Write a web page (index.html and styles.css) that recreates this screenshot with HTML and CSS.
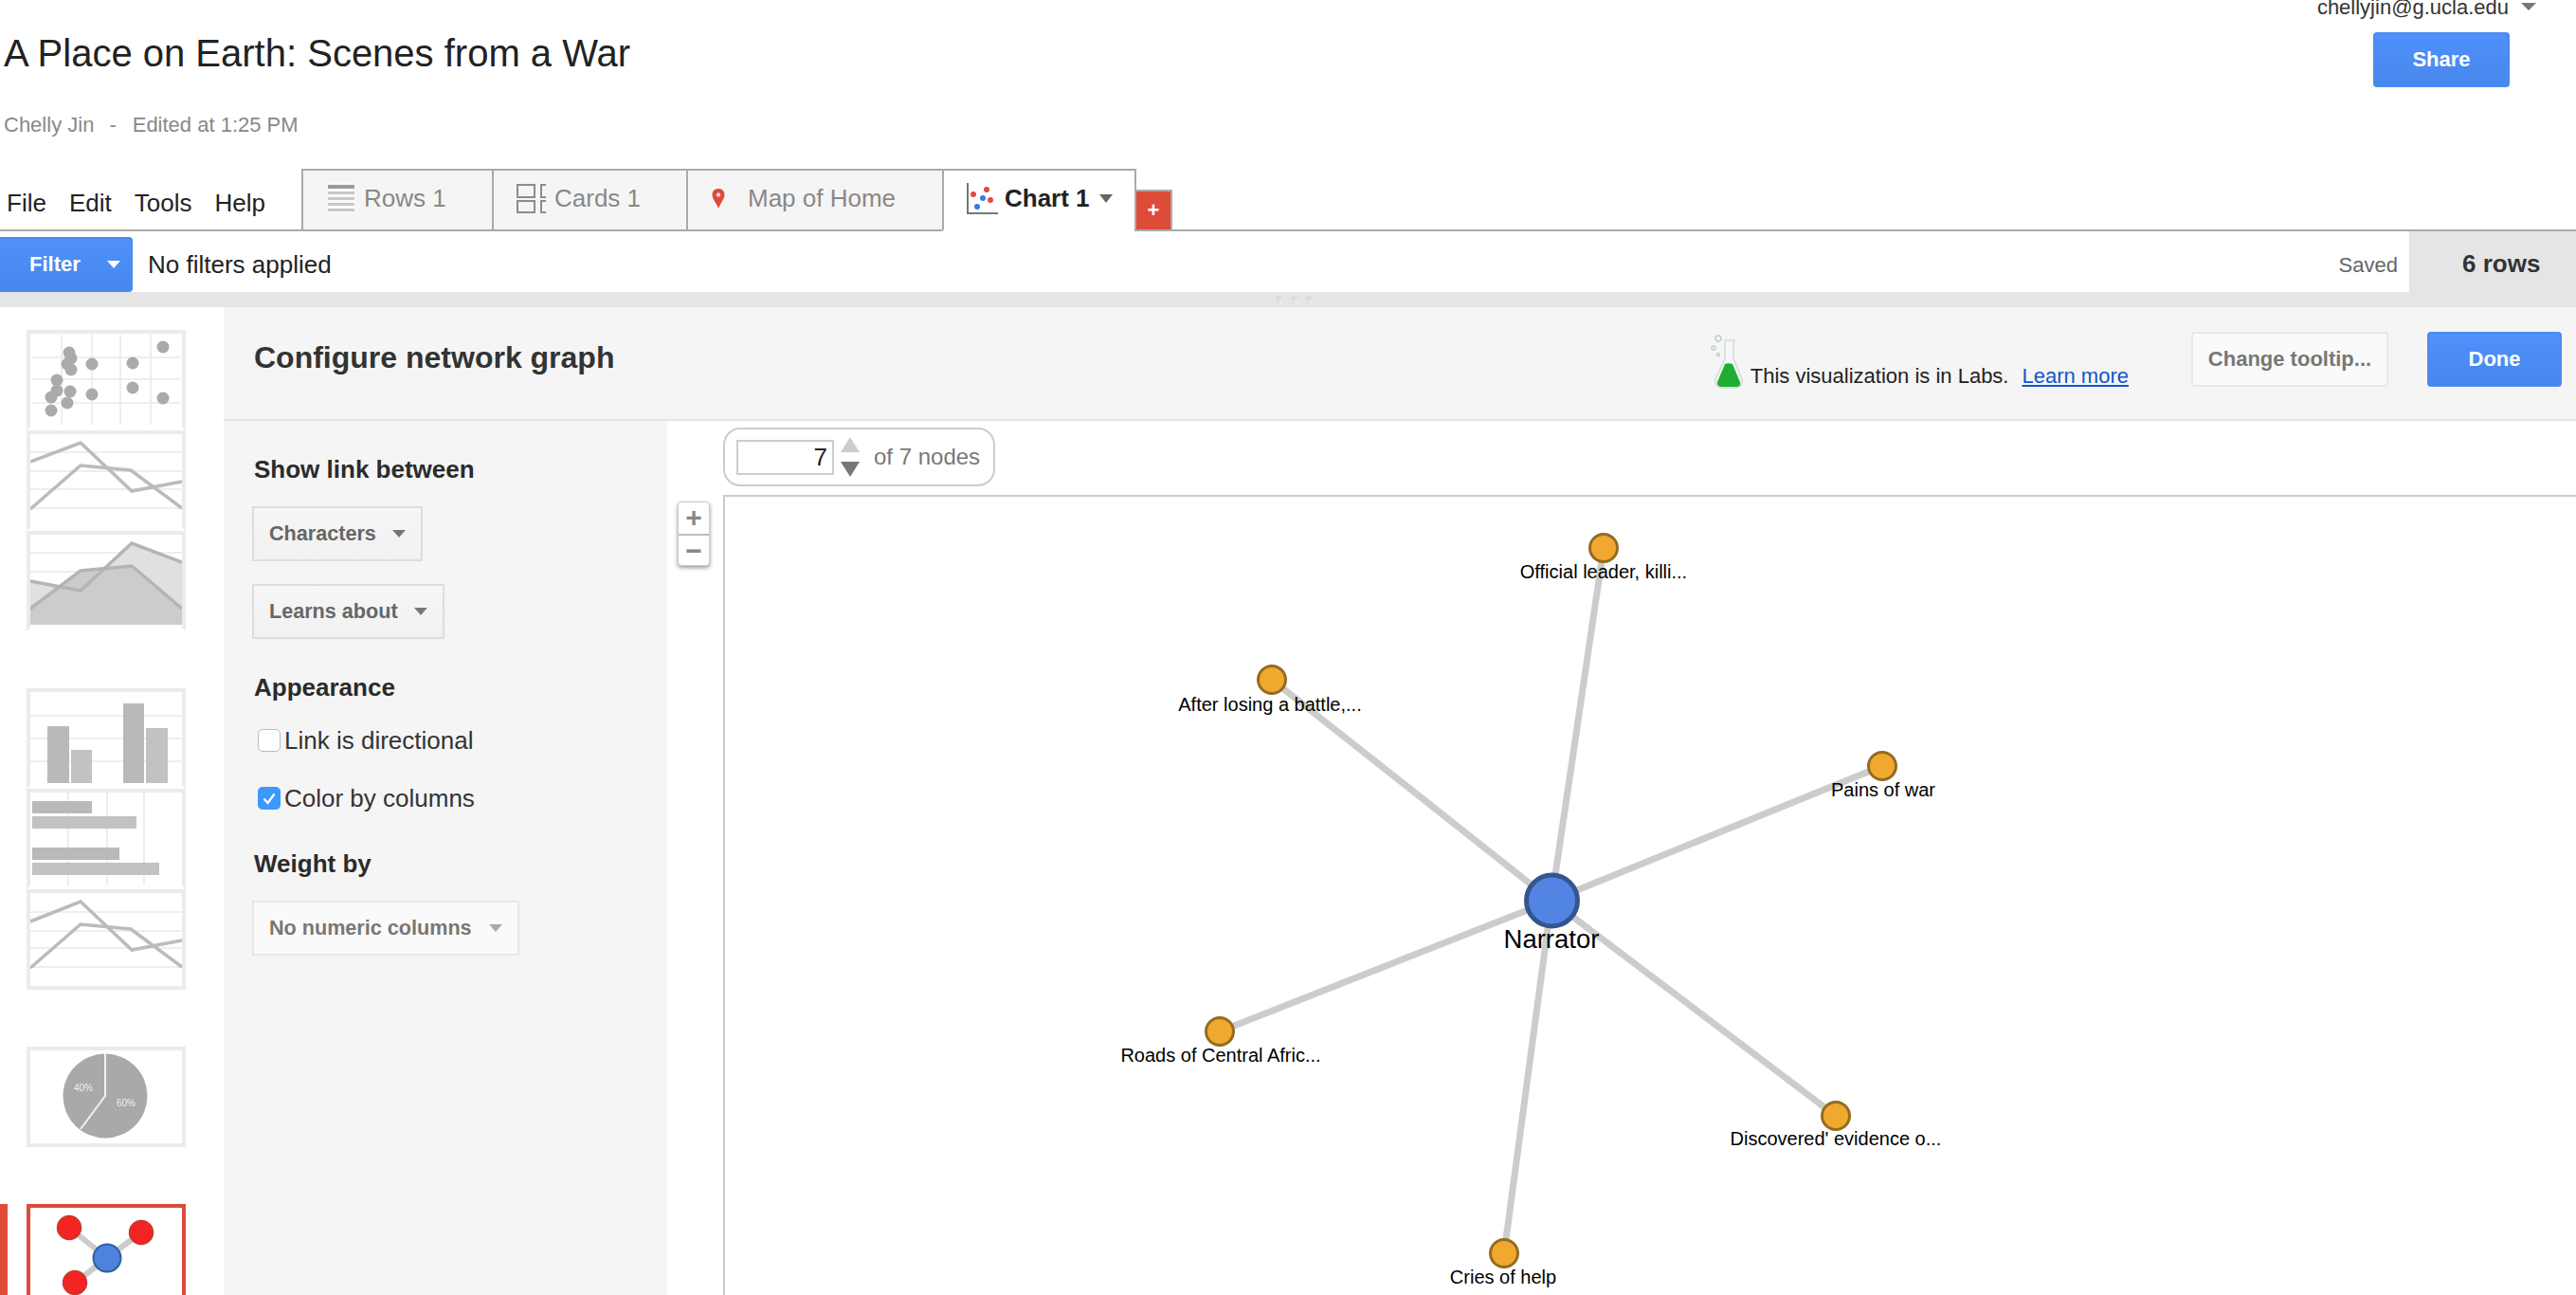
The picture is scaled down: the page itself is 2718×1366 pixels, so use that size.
FILE: index.html
```html
<!DOCTYPE html>
<html lang="en">
<head>
<meta charset="utf-8">
<title>A Place on Earth: Scenes from a War</title>
<link rel="stylesheet" href="styles.css">
</head>
<body>
<header class="topbar">
  <div class="doc">
    <h1 class="doc-title">A Place on Earth: Scenes from a War</h1>
    <p class="doc-meta">Chelly Jin<span class="doc-sep">-</span>Edited at 1:25 PM</p>
  </div>
  <div class="account">
    <div class="account-user"><span>chellyjin@g.ucla.edu</span><i class="arrow arrow-user"></i></div>
    <button class="btn-blue btn-share">Share</button>
  </div>
</header>

<nav class="tabbar">
  <ul class="menu">
    <li>File</li><li>Edit</li><li>Tools</li><li>Help</li>
  </ul>
  <div class="tabs">
    <div class="tab tab-rows">
      <svg class="tab-icon" width="30" height="32" viewBox="0 0 30 32"><rect width="30" height="32" fill="#fafafa"/><rect x="1" y="2" width="28" height="4" fill="#9a9a9a"/><g fill="#c8c8c8"><rect x="1" y="9" width="28" height="3"/><rect x="1" y="15" width="28" height="3"/><rect x="1" y="21" width="28" height="3"/><rect x="1" y="27" width="28" height="3"/></g></svg>
      <span>Rows 1</span>
    </div>
    <div class="tab tab-cards">
      <svg class="tab-icon" width="31" height="31" viewBox="0 0 31 31"><g fill="none" stroke="#8c8c8c" stroke-width="2"><rect x="1" y="1" width="18" height="13"/><rect x="1" y="18" width="18" height="12"/><path d="M31 1h-5v13h5M31 18h-5v12h5"/></g></svg>
      <span>Cards 1</span>
    </div>
    <div class="tab tab-map">
      <svg class="tab-icon" width="14" height="21" viewBox="0 0 14 21"><path d="M7 0C3 0 .5 2.800 .5 6.500 .5 11 5 15 7 21c2-6 6.500-10 6.500-14.500C13.500 2.800 11 0 7 0z" fill="#dd4b39"/><circle cx="7" cy="6.500" r="2.200" fill="#f7d0cb"/></svg>
      <span>Map of Home</span>
    </div>
    <div class="tab tab-active">
      <svg class="tab-icon" width="33" height="33" viewBox="0 0 33 33"><path d="M1 0v32h32" fill="none" stroke="#777" stroke-width="2"/><g fill="#dd4b39"><circle cx="7" cy="12" r="3"/><circle cx="21" cy="7" r="3"/><circle cx="25" cy="18" r="3"/></g><g fill="#3b78e7"><circle cx="17" cy="16" r="3"/><circle cx="11" cy="25" r="3"/></g></svg>
      <span>Chart 1</span>
      <i class="arrow arrow-tab"></i>
    </div>
    <div class="tab-add"><span>+</span></div>
  </div>
</nav>

<section class="filterbar">
  <button class="btn-blue btn-filter"><span>Filter</span><i class="arrow arrow-white"></i></button>
  <span class="filter-text">No filters applied</span>
  <span class="saved">Saved</span>
  <div class="rowcount">6 rows</div>
</section>
<div class="splitter"><i></i><i></i><i></i></div>

<main class="main">
  <aside class="thumbs">
    <div class="thumb">
      <svg class="thumb-art" width="160" height="102" viewBox="0 0 160 102"><g stroke="#eee" stroke-width="2"><path d="M33 1v95M65 1v95M95 1v95M127 1v95M2 25h156M2 48h156M2 73h156"/></g><g fill="#aaa"><circle cx="140" cy="14" r="6.500"/><circle cx="41" cy="20" r="6.500"/><circle cx="43" cy="26" r="6.500"/><circle cx="39" cy="32" r="6.500"/><circle cx="43" cy="38" r="6.500"/><circle cx="65" cy="32" r="6.500"/><circle cx="108" cy="31" r="6.500"/><circle cx="28" cy="49" r="6.500"/><circle cx="108" cy="57" r="6.500"/><circle cx="28" cy="60" r="6.500"/><circle cx="42" cy="61" r="6.500"/><circle cx="22" cy="67" r="6.500"/><circle cx="65" cy="64" r="6.500"/><circle cx="39" cy="73" r="6.500"/><circle cx="140" cy="68" r="6.500"/><circle cx="22" cy="81" r="6.500"/></g></svg>
    </div>
    <div class="thumb">
      <svg class="thumb-art" width="160" height="102" viewBox="0 0 160 102"><path d="M0 19h160M0 39h160M0 58h160M0 78h160" stroke="#eee" stroke-width="2"/><g fill="none" stroke="#bbb" stroke-width="3.500"><path d="M0 29 53 9l54 51 53-10"/><path d="M0 79 53 33l53 5 54 40"/></g></svg>
    </div>
    <div class="thumb">
      <svg class="thumb-art" width="160" height="102" viewBox="0 0 160 102"><path d="M0 19h160M0 39h160M0 59h160M0 79h160" stroke="#eee" stroke-width="2"/><path d="M0 49 53 59 107 9l53 20v66H0z" fill="#e0e0e0"/><path d="M0 78 53 38l54-5 53 45v17H0z" fill="#cccccc"/><g fill="none" stroke="#b4b4b4" stroke-width="3.500"><path d="M0 49 53 59 107 9l53 20"/><path d="M0 78 53 38l54-5 53 45"/></g></svg>
    </div>

    <div class="thumb thumb-group">
      <svg class="thumb-art" width="160" height="102" viewBox="0 0 160 102"><path d="M0 25h160M0 49h160M0 73h160" stroke="#eee" stroke-width="2"/><rect x="18" y="36" width="23" height="60" fill="#b9b9b9"/><rect x="43" y="61" width="22" height="35" fill="#c2c2c2"/><rect x="98" y="12" width="22" height="84" fill="#b9b9b9"/><rect x="122" y="38" width="23" height="58" fill="#c2c2c2"/></svg>
    </div>
    <div class="thumb">
      <svg class="thumb-art" width="160" height="102" viewBox="0 0 160 102"><path d="M40 0v98M81 0v98M120 0v98" stroke="#eee" stroke-width="2"/><rect x="2" y="9" width="63" height="13" fill="#b9b9b9"/><rect x="2" y="25" width="110" height="13" fill="#c2c2c2"/><rect x="2" y="58" width="92" height="13" fill="#b9b9b9"/><rect x="2" y="74" width="134" height="13" fill="#c2c2c2"/></svg>
    </div>
    <div class="thumb thumb-closed">
      <svg class="thumb-art" width="160" height="98" viewBox="0 0 160 98"><path d="M0 20h160M0 40h160M0 58h160M0 78h160" stroke="#eee" stroke-width="2"/><g fill="none" stroke="#bbb" stroke-width="3.500"><path d="M0 30 53 9l54 51 53-10"/><path d="M0 79 53 33l53 5 54 40"/></g></svg>
    </div>

    <div class="thumb thumb-group thumb-closed">
      <svg class="thumb-art" width="160" height="98" viewBox="0 0 160 98"><circle cx="79" cy="48" r="44.500" fill="#a9a9a9"/><path d="M79 3v45L53 83" fill="none" stroke="#f2f2f2" stroke-width="2"/><text x="56" y="43" class="pie-label" text-anchor="middle">40%</text><text x="101" y="59" class="pie-label" text-anchor="middle">60%</text></svg>
    </div>

    <div class="thumb thumb-group thumb-active">
      <svg class="thumb-art" width="160" height="98" viewBox="0 0 160 98"><path d="M41 21 81 53M117 26 81 53M47 79 81 53" stroke="#ccc" stroke-width="6"/><g fill="#f32424" stroke="#c23b2a" stroke-width="1.500"><circle cx="41" cy="21" r="12.500"/><circle cx="117" cy="26" r="12.500"/><circle cx="47" cy="79" r="12.500"/></g><circle cx="81" cy="53" r="14.500" fill="#4f82dc" stroke="#2f5fa0" stroke-width="2"/></svg>
    </div>
  </aside>

  <div class="config">
    <div class="config-head">
      <h2 class="config-title">Configure network graph</h2>
      <svg class="flask" width="38" height="58" viewBox="0 0 38 58"><g fill="none" stroke="#c4ccd0" stroke-width="1.500"><circle cx="9" cy="5" r="3"/><circle cx="4" cy="15" r="2"/><circle cx="9" cy="22" r="1.500"/></g><path d="M16 7h10l-1 3v16l9 22c1.500 5-2 9-6 9H12c-4 0-7-4-6-9l10-22z" fill="#f4f7f7" stroke="#d3dada" stroke-width="1.500"/><path d="M16 32c2-1 6-1 8 0l8 19c1 3-1 5-4 5H13c-3 0-6-2-5-5z" fill="#21ad33"/></svg>
      <span class="labs-text">This visualization is in Labs.</span>
      <a class="labs-link" href="#">Learn more</a>
      <button class="btn-tooltip">Change tooltip...</button>
      <button class="btn-blue btn-done">Done</button>
    </div>
    <div class="config-body">
      <div class="panel">
        <h3 class="panel-heading panel-heading-first">Show link between</h3>
        <div class="select select-first">Characters<i class="arrow arrow-grey"></i></div>
        <div class="select select-second">Learns about<i class="arrow arrow-grey"></i></div>
        <h3 class="panel-heading panel-heading-appearance">Appearance</h3>
        <label class="check check-first"><span class="box"></span>Link is directional</label>
        <label class="check check-second"><span class="box box-on"><svg width="24" height="24" viewBox="0 0 24 24"><path d="M6.500 12.500 10.500 17 17.500 7.500" fill="none" stroke="#fff" stroke-width="2.200"/></svg></span>Color by columns</label>
        <h3 class="panel-heading panel-heading-weight">Weight by</h3>
        <div class="select select-disabled">No numeric columns<i class="arrow arrow-light"></i></div>
      </div>
      <div class="chartarea">
        <div class="zoom">
          <div class="zoom-btn">+</div>
          <div class="zoom-btn zoom-minus">−</div>
        </div>
        <div class="chartcol">
          <div class="nodes-widget">
            <span class="nodes-input">7</span>
            <span class="spinner"><i class="spin-up"></i><i class="spin-down"></i></span>
            <span class="nodes-label">of 7 nodes</span>
          </div>
          <div class="frame">
            <svg class="graph" width="1953" height="842" viewBox="765 524 1953 842">
              <g class="links">
                <path d="M1637 950 1692 578"/>
                <path d="M1637 950 1342 717"/>
                <path d="M1637 950 1986 808"/>
                <path d="M1637 950 1287 1088"/>
                <path d="M1637 950 1937 1177"/>
                <path d="M1637 950 1587 1322"/>
              </g>
              <g class="leafs">
                <circle cx="1692" cy="578" r="14.500"/>
                <circle cx="1342" cy="717" r="14.500"/>
                <circle cx="1986" cy="808" r="14.500"/>
                <circle cx="1287" cy="1088" r="14.500"/>
                <circle cx="1937" cy="1177" r="14.500"/>
                <circle cx="1587" cy="1322" r="14.500"/>
              </g>
              <circle class="hub" cx="1637.500" cy="950" r="27"/>
              <g class="labels" text-anchor="middle">
                <text x="1692" y="610">Official leader, killi...</text>
                <text x="1340" y="750">After losing a battle,...</text>
                <text x="1987" y="840">Pains of war</text>
                <text x="1288" y="1120">Roads of Central Afric...</text>
                <text x="1937" y="1208">Discovered' evidence o...</text>
                <text x="1586" y="1354">Cries of help</text>
                <text class="hub-label" x="1637" y="1000">Narrator</text>
              </g>
            </svg>
          </div>
        </div>
      </div>
    </div>
  </div>
</main>
</body>
</html>
```

FILE: styles.css
```css
* { box-sizing: border-box; }
html, body { margin: 0; height: 100%; }
body {
  width: 2718px;
  height: 1366px;
  overflow: hidden;
  background: #fff;
  color: #222;
  font-family: "Liberation Sans", Arial, sans-serif;
  display: flex;
  flex-direction: column;
}
button { font-family: inherit; cursor: pointer; }
i { display: block; }

/* arrows */
.arrow { width: 0; height: 0; border-style: solid; border-color: transparent; border-bottom-width: 0; }
.arrow-user { border-width: 8px 8px 0; border-top-color: #777; margin-left: 13px; margin-top: -3px; }
.arrow-tab { border-width: 9px 7.500px 0; border-top-color: #666; margin-left: 10px; }
.arrow-white { border-width: 8px 7px 0; border-top-color: #fff; }
.arrow-grey { border-width: 8px 7.500px 0; border-top-color: #777; margin-left: 17px; }
.arrow-light { border-width: 8px 7.500px 0; border-top-color: #aaa; margin-left: 18px; }

/* top */
.topbar { height: 178px; flex: none; display: flex; justify-content: space-between; }
.doc { padding-left: 4px; }
.doc-title { margin: 32px 0 0; font-size: 40px; line-height: 48px; font-weight: 400; color: #222; white-space: nowrap; }
.doc-meta { margin: 39px 0 0; font-size: 22px; line-height: 26px; color: #888; }
.doc-sep { margin: 0 17px 0 16px; }
.account { display: flex; flex-direction: column; align-items: flex-end; }
.account-user { display: flex; align-items: center; height: 16px; font-size: 22px; line-height: 16px; color: #333; padding-right: 42px; }
.btn-blue {
  border: 2px solid #4a8bf0;
  border-radius: 4px;
  background: linear-gradient(#4f90fb, #4787ed);
  color: #fff;
  font-weight: 700;
  font-size: 22px;
  padding: 0;
}
.btn-share { width: 144px; height: 58px; margin: 18px 70px 0 0; }

/* tabs */
.tabbar { height: 66px; flex: none; display: flex; border-bottom: 2px solid #aaa; }
.menu { list-style: none; margin: 0; padding: 0 0 13px 7px; width: 318px; display: flex; gap: 24px; font-size: 26px; color: #222; height: 64px; align-items: flex-end; line-height: 30px; }
.tabs { display: flex; align-items: flex-end; height: 66px; }
.tab {
  height: 66px;
  display: flex;
  align-items: center;
  background: #f5f5f5;
  border: 2px solid #aaa;
  border-right-width: 0;
  color: #888;
  font-size: 26px;
  padding-bottom: 4px;
}
.tab-rows { width: 201px; padding-left: 25px; }
.tab-cards { width: 205px; padding-left: 24px; }
.tab-map { width: 270px; padding-left: 25px; }
.tab-active { width: 205px; padding-left: 24px; background: #fff; border-bottom-color: #fff; color: #222; font-weight: 700; border-right-width: 2px; }
.tab-icon { flex: none; margin-right: 9px; }
.tab-map .tab-icon { margin-right: 24px; }
.tab-active .tab-icon { margin-right: 7px; }
.tab-add {
  width: 40px;
  height: 44px;
  margin-left: -2px;
  background: #dd4b39;
  border: 2px solid #aaa;
  color: #fff;
  font-weight: 700;
  font-size: 22px;
  display: flex;
  align-items: center;
  justify-content: center;
}

/* filter */
.filterbar { height: 64px; flex: none; display: flex; align-items: flex-start; }
.btn-filter { width: 140px; height: 58px; margin-top: 6px; border-left: 0; border-radius: 0 4px 4px 0; display: flex; align-items: center; padding: 0 11px 0 31px; justify-content: space-between; font-size: 22px; }
.filter-text { margin-left: 16px; margin-top: 20px; font-size: 26px; line-height: 30px; color: #222; }
.saved { margin-left: auto; margin-top: 23px; font-size: 22px; line-height: 26px; color: #666; padding-right: 12px; }
.rowcount { width: 176px; height: 64px; background: #e5e5e5; font-weight: 700; font-size: 26px; line-height: 30px; color: #333; padding: 19px 0 0 56px; }
.splitter { height: 16px; flex: none; background: #e5e5e5; display: flex; justify-content: center; align-items: center; gap: 10px; padding-left: 14px; }
.splitter i { width: 6px; height: 7px; background: linear-gradient(135deg, #c5cfe0, #f2f4f8); }

/* main */
.main { flex: 1; min-height: 0; display: flex; }
.thumbs { width: 236px; flex: none; padding: 24px 0 0 28px; background: #fff; }
.thumb { position: relative; width: 168px; height: 106px; border: 4px solid #ebebeb; border-bottom-color: #fff; }
.thumb-group { margin-top: 60px; }
.thumb-closed { border-bottom-color: #ebebeb; }
.thumb-active { border-color: #dd4b39; }
.thumb-active::before { content: ""; position: absolute; left: -32px; top: -4px; width: 8px; height: 110px; background: #dd4b39; }
.thumb-art { display: block; filter: blur(.7px); }
.pie-label { font-size: 10px; fill: #f0f0f0; font-family: "Liberation Sans", Arial, sans-serif; }

.config { flex: 1; min-width: 0; display: flex; flex-direction: column; }
.config-head { height: 120px; flex: none; display: flex; align-items: flex-start; background: #f5f5f5; border-bottom: 2px solid #e5e5e5; }
.config-title { margin: 35px 0 0 32px; font-size: 32px; line-height: 36px; font-weight: 700; color: #333; }
.flask { margin: 28px 0 0 auto; }
.labs-text { margin: 60px 0 0 5px; font-size: 22px; line-height: 26px; color: #222; }
.labs-link { margin: 60px 0 0 14px; font-size: 22px; line-height: 26px; color: #15c; }
.btn-tooltip { width: 208px; height: 58px; margin: 26px 0 0 66px; border: 2px solid #e8e8e8; border-radius: 3px; background: #fafafa; color: #777; font-weight: 700; font-size: 22px; padding: 0; }
.btn-done { width: 142px; height: 58px; margin: 26px 15px 0 41px; }

.config-body { flex: 1; min-height: 0; display: flex; }
.panel { width: 468px; flex: none; background: #f5f5f5; padding-left: 30px; }
.panel-heading { margin: 0; padding-left: 2px; font-size: 26px; line-height: 30px; font-weight: 700; color: #2b2b2b; }
.panel-heading-first { margin-top: 36px; }
.panel-heading-appearance { margin-top: 36px; }
.panel-heading-weight { margin-top: 39px; }
.select { display: flex; width: fit-content; height: 58px; align-items: center; padding: 0 16px; border: 2px solid #ddd; background: linear-gradient(#f6f6f6, #f1f1f1); font-size: 21.600px; font-weight: 700; color: #666; }
.select-first { margin-top: 24px; }
.select-second { margin-top: 24px; }
.select-disabled { margin-top: 24px; background: #fafafa; border-color: #e8e8e8; color: #777; }
.check { display: flex; align-items: center; height: 30px; margin-left: 6px; font-size: 26px; color: #333; }
.check-first { margin-top: 26px; }
.check-second { margin-top: 31px; }
.box { width: 24px; height: 24px; margin-right: 4px; border: 1px solid #bbb; border-radius: 5px; background: #fff; flex: none; }
.box-on { border: 0; background: #3b99fc; }
.box svg { display: block; }

.chartarea { flex: 1; min-width: 0; display: flex; background: #fff; }
.zoom { width: 34px; height: 68px; margin: 85px 14px 0 11px; flex: none; background: #fff; border: 1px solid #ccc; border-radius: 4px; box-shadow: 0 2px 4px rgba(0,0,0,.4); color: #888; font-weight: 700; font-size: 30px; text-align: center; line-height: 32px; }
.zoom-btn { height: 33px; }
.zoom-minus { border-top: 2px solid #bbb; }
.chartcol { flex: 1; min-width: 0; display: flex; flex-direction: column; }
.nodes-widget { width: 287px; height: 62px; margin-top: 7px; flex: none; display: flex; align-items: center; border: 2px solid #ccc; border-radius: 18px; padding-left: 12px; }
.nodes-input { width: 103px; height: 37px; border: 2px solid #ccc; font-size: 26px; line-height: 33px; text-align: right; padding-right: 5px; color: #222; }
.spinner { display: flex; flex-direction: column; gap: 10px; margin-left: 7px; }
.spinner i { width: 0; height: 0; border-style: solid; border-color: transparent; }
.spin-up { border-width: 0 10px 16px; border-bottom-color: #ccc !important; }
.spin-down { border-width: 16px 10px 0; border-top-color: #777 !important; }
.nodes-label { margin-left: 15px; font-size: 24px; color: #777; }
.frame { flex: 1; min-height: 0; margin-top: 9px; border-left: 2px solid #ccc; border-top: 2px solid #ccc; overflow: hidden; }
.graph { display: block; }
.links path { fill: none; stroke: #ccc; stroke-width: 7; }
.leafs circle { fill: #f1a82f; stroke: #936b20; stroke-width: 3; }
.hub { fill: #5285e3; stroke: #35558f; stroke-width: 5; }
.labels text { font-size: 20px; fill: #000; font-family: "Liberation Sans", Arial, sans-serif; }
.labels .hub-label { font-size: 27.500px; }
```
